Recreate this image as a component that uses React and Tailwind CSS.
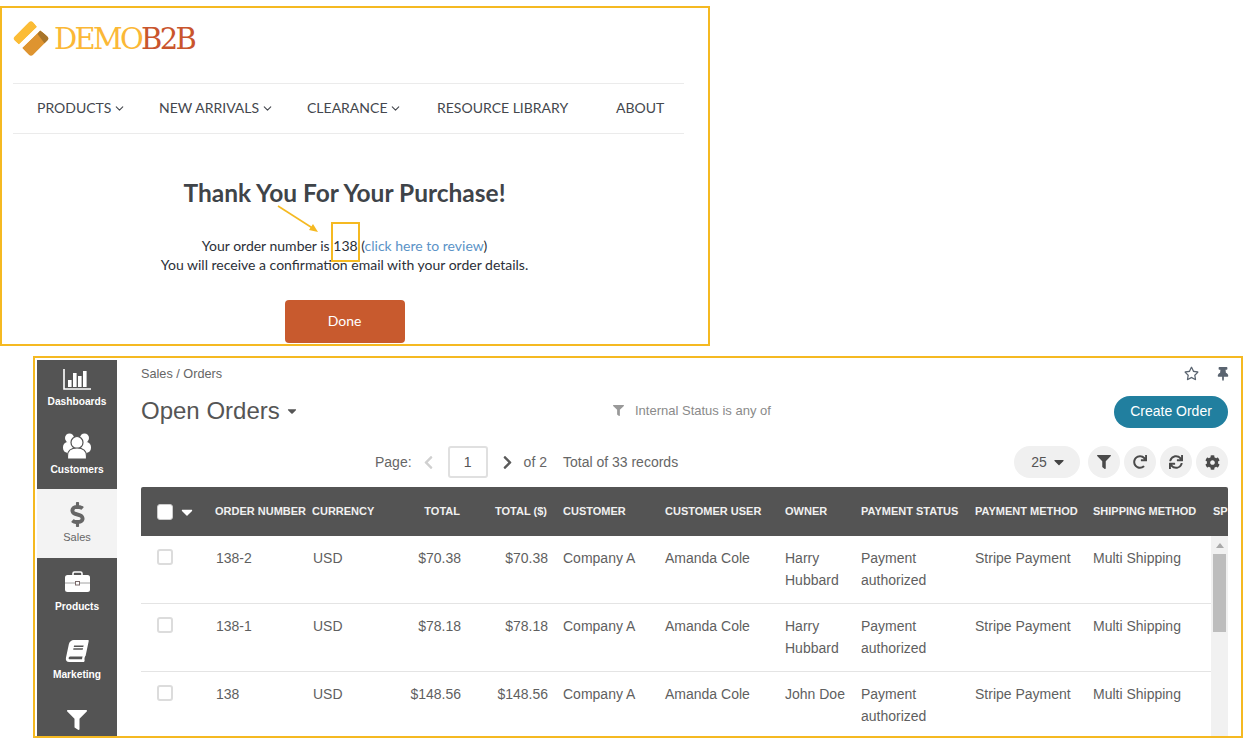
import React from 'react';
import {
  FaBook, FaCaretDown, FaChevronLeft, FaChevronRight, FaCog, FaDollarSign,
  FaFilter, FaRedo, FaRegStar, FaSync, FaThumbtack,
} from 'react-icons/fa';
import { LuChevronDown } from 'react-icons/lu';

const menu = [
  { label: 'PRODUCTS', caret: true, w: 'w-[122px]' },
  { label: 'NEW ARRIVALS', caret: true, w: 'w-[148px]' },
  { label: 'CLEARANCE', caret: true, w: 'w-[130px]' },
  { label: 'RESOURCE LIBRARY', w: 'w-[179px]' },
  { label: 'ABOUT', w: 'w-[48px]' },
];

const columns = [
  { label: 'ORDER NUMBER' },
  { label: 'CURRENCY' },
  { label: 'TOTAL', right: true },
  { label: 'TOTAL ($)', right: true },
  { label: 'CUSTOMER', pad: true },
  { label: 'CUSTOMER USER' },
  { label: 'OWNER' },
  { label: 'PAYMENT STATUS' },
  { label: 'PAYMENT METHOD' },
  { label: 'SHIPPING METHOD' },
  { label: 'SPECIAL' },
];

const orders = [
  { id: '138-2', total: '$70.38', owner: 'Harry Hubbard' },
  { id: '138-1', total: '$78.18', owner: 'Harry Hubbard' },
  { id: '138', total: '$148.56', owner: 'John Doe' },
];

const gridCols = 'grid grid-cols-[74px_97px_52px_97px_87px_117px_120px_76px_114px_118px_120px_60px]';

function ChartIcon() {
  return (
    <svg width="28" height="21" viewBox="0 0 28 21" fill="none">
      <path d="M1 0v20h27" stroke="white" strokeWidth="1.6" />
      <rect x="5" y="11" width="3.6" height="7" fill="white" />
      <rect x="10" y="4" width="3.6" height="14" fill="white" />
      <rect x="15" y="7" width="3.6" height="11" fill="white" />
      <rect x="20" y="2" width="3.6" height="16" fill="white" />
    </svg>
  );
}

function UsersIcon() {
  return (
    <svg width="28" height="26" viewBox="0 0 28 26">
      <circle cx="6.500" cy="5" r="4.500" fill="white" />
      <circle cx="21.500" cy="5" r="4.500" fill="white" />
      <rect x="0" y="9" width="28" height="11" rx="5" fill="white" />
      <circle cx="14" cy="9.500" r="6" fill="white" stroke="#545454" strokeWidth="1.2" />
      <path d="M4.500 26v-3q0-8 9.500-8t9.500 8v3z" fill="white" stroke="#545454" strokeWidth="1.2" />
    </svg>
  );
}

function CaseIcon() {
  return (
    <svg width="25" height="21" viewBox="0 0 25 21" fill="none">
      <path d="M8 5V2.500Q8 1 9.500 1h6Q17 1 17 2.500V5" stroke="white" strokeWidth="1.6" />
      <rect x="0" y="4" width="25" height="17" rx="2.500" fill="white" />
      <path d="M0 12h25" stroke="#8a8a8a" strokeWidth="0.8" />
      <rect x="10.500" y="10.500" width="4" height="3.500" fill="white" stroke="#7a6a6a" strokeWidth="1" />
    </svg>
  );
}

function Logo() {
  return (
    <svg width="36" height="36" viewBox="0 0 36 36">
      <defs>
        <clipPath id="logoClip">
          <rect x="5" y="4.500" width="26" height="26" rx="3" transform="rotate(45 18 17.500)" />
        </clipPath>
      </defs>
      <g clipPath="url(#logoClip)">
        <path d="M-2 17.500 L18 -2 L24 6 L6 23.500Z" fill="#fbbc36" />
        <path d="M9 27 L27 9.500 L38 17.500 L18 38Z" fill="#de9430" />
        <path d="M27 9.500 L38 17.500 L32 23 L24.500 13Z" fill="#a8752a" />
        <path d="M24 6 L6 23.500 L9 27 L27 9.500Z" fill="#fff" />
      </g>
    </svg>
  );
}

function SideItem({ icon, label, active, h = 'h-[68px]', box = 'h-[41px] pb-[3px]' }) {
  return (
    <div className={`${h} flex flex-col items-center shrink-0 ${active ? 'bg-[#f3f3f3] text-[#666] text-[11px]' : 'text-white font-bold text-[10.2px]'}`}>
      <div className={`${box} flex items-end justify-center`}>{icon}</div>
      <div className="leading-[14px] mt-[1px]">{label}</div>
    </div>
  );
}

function RoundBtn({ children }) {
  return (
    <button className="w-8 h-8 rounded-full bg-[#f0f0f0] flex items-center justify-center text-[#4a4a4a]">
      {children}
    </button>
  );
}

export default function App() {
  return (
    <div className="w-[1243px] h-[738px] overflow-hidden bg-white pt-[6px]">
      {/* Storefront confirmation */}
      <div className="relative w-[710px] h-[340px] border-2 border-[#f5b921] font-['Lato',sans-serif] text-[#3c3f44]">
        <div className="h-[75px] pl-[11px] pt-[13px] flex items-start">
          <Logo />
          <div className="ml-[5px] font-['DejaVu_Serif',serif] text-[29px] leading-[36px] tracking-[-2.7px]">
            <span className="text-[#fbb836]">DEMO</span>
            <span className="text-[#c9552d]">B2B</span>
          </div>
        </div>
        <div className="mx-[11px] w-[671px] h-[51px] pb-[2px] border-y border-[#ebebeb] flex items-center pl-[24px] text-[14px] text-[#44474d]">
          {menu.map((m) => (
            <div key={m.label} className={`${m.w} flex items-center shrink-0`}>
              {m.label}
              {m.caret && <LuChevronDown className="ml-[2px] mt-[2px]" size={13} />}
            </div>
          ))}
        </div>
        <h1 className="mt-[44px] text-center text-[24.5px] leading-[30px] font-bold text-[#3f4449] w-[685px]">
          Thank You For Your Purchase!
        </h1>
        <div className="mt-[28px] w-[685px] text-center text-[14px] leading-[19px] text-[#2c3038]">
          <div>
            Your order number is 138 (<span className="text-[#5b93c7]">click here to review</span>)
          </div>
          <div>You will receive a confirmation email with your order details.</div>
        </div>
        <div className="mt-[26px] w-[685px] flex justify-center">
          <button className="w-[120px] h-[43px] pb-[2px] rounded-[4px] bg-[#c85a2e] text-white text-[14px]">Done</button>
        </div>
        {/* annotation */}
        <div className="absolute left-[329px] top-[214px] w-[29px] h-[40px] border-2 border-[#f5b921]" />
        <svg className="absolute left-[270px] top-[194px]" width="50" height="36" viewBox="0 0 50 36" fill="none">
          <path d="M6 4 L42 27" stroke="#f5b921" strokeWidth="1.6" />
          <path d="M46 30 L37 28 L41 22Z" fill="#f5b921" />
        </svg>
      </div>

      {/* Admin orders grid */}
      <div className="mt-[10px] ml-[33px] w-[1210px] h-[382px] border-2 border-[#f5b921] pt-[2px] px-[2px] flex overflow-hidden font-['Liberation_Sans',sans-serif] text-[14px] text-[#5f5f5f]">
        <div className="w-[80px] h-full bg-[#545454] flex flex-col shrink-0 overflow-hidden">
          <SideItem icon={<ChartIcon />} label="Dashboards" h="h-[61px]" box="h-[34px] pb-[4px]" />
          <SideItem icon={<UsersIcon />} label="Customers" />
          <SideItem icon={<FaDollarSign size={25} />} label="Sales" active h="h-[69px]" box="h-[40px] pb-[2px]" />
          <SideItem icon={<CaseIcon />} label="Products" box="h-[41px] pb-[7px]" />
          <SideItem icon={<FaBook size={22} className="-skew-x-12" />} label="Marketing" box="h-[41px] pb-[5px]" />
          <SideItem icon={<FaFilter size={20} />} label="" box="h-[41px] pb-[5px]" />
        </div>

        <div className="flex-1 min-w-0 pl-[24px] pr-[11px] flex flex-col">
          <div className="h-[27px] flex items-center justify-between text-[12.7px] text-[#666]">
            <span className="pt-[2px]">Sales / Orders</span>
            <div className="flex items-center gap-[17px] -mr-[2px] text-[#5a6470]">
              <FaRegStar size={15} />
              <FaThumbtack size={14} />
            </div>
          </div>
          <div className="h-[47px] mt-[1px] flex items-center">
            <div className="w-[472px] pb-[2px] flex items-center text-[24px] text-[#555] shrink-0">
              Open Orders
              <FaCaretDown size={14} className="ml-[5px]" />
            </div>
            <div className="pb-[2px] flex items-center text-[13px] text-[#8a8a8a] flex-1">
              <FaFilter size={11} className="text-[#999] mr-[11px]" />
              Internal Status is any of
            </div>
            <button className="w-[114px] h-8 rounded-full bg-[#217f9f] text-white text-[14px]">Create Order</button>
          </div>
          <div className="h-[32px] mt-[11px] flex items-center justify-between">
            <div className="pl-[234px] flex items-center text-[14px] text-[#666]">
              <span>Page:</span>
              <FaChevronLeft size={15} className="ml-[9px] text-[#d0d0d0]" />
              <div className="w-[40px] h-8 ml-[12px] border-2 border-[#e0e0e0] rounded-[3px] flex items-center justify-center text-[#555]">1</div>
              <FaChevronRight size={15} className="ml-[12px] text-[#5a5a5a]" />
              <span className="ml-[9px]">of 2</span>
              <span className="ml-[16px]">Total of 33 records</span>
            </div>
            <div className="flex items-center gap-1">
              <div className="w-[66px] h-8 mr-[4px] pl-[4px] rounded-full bg-[#f0f0f0] flex items-center justify-center text-[#555]">
                25
                <FaCaretDown size={16} className="ml-[4px] text-[#444]" />
              </div>
              <RoundBtn><FaFilter size={14} /></RoundBtn>
              <RoundBtn><FaRedo size={14} /></RoundBtn>
              <RoundBtn><FaSync size={14} /></RoundBtn>
              <RoundBtn><FaCog size={15} /></RoundBtn>
            </div>
          </div>

          <div className="mt-[9px] flex-1 min-h-0 flex flex-col">
            <div className={`${gridCols} h-[49px] shrink-0 bg-[#545454] rounded-t-[2px] overflow-hidden items-center text-[11px] font-bold text-[#f0f0f0] whitespace-nowrap`}>
              <div className="pl-[16px] flex items-center">
                <span className="w-4 h-4 rounded-[3px] bg-white border border-[#ccc]" />
                <FaCaretDown size={18} className="ml-[5px] text-white" />
              </div>
              {columns.map((c) => (
                <div key={c.label} className={`${c.right ? 'text-right pr-[1px]' : ''} ${c.pad ? 'pl-[15px]' : ''}`}>{c.label}</div>
              ))}
            </div>
            <div className="flex-1 min-h-0 relative overflow-hidden">
              {orders.map((o) => (
                <div key={o.id} className={`${gridCols} h-[68px] border-b border-[#e4e4e4] mr-[17px] pt-[11px] leading-[22px]`}>
                  <div className="pl-[16px] pt-[2px]">
                    <span className="block w-4 h-4 rounded-[3px] border-2 border-[#dcdcdc]" />
                  </div>
                  <div className="pl-[1px]">{o.id}</div>
                  <div className="pl-[1px]">USD</div>
                  <div className="text-right">{o.total}</div>
                  <div className="text-right">{o.total}</div>
                  <div className="pl-[15px]">Company A</div>
                  <div>Amanda Cole</div>
                  <div>{o.owner}</div>
                  <div>Payment authorized</div>
                  <div>Stripe Payment</div>
                  <div>Multi Shipping</div>
                </div>
              ))}
              {/* scrollbar */}
              <div className="absolute right-0 top-0 bottom-0 w-[17px] bg-[#f1f1f1]">
                <div className="mx-auto mt-[7px] w-0 h-0 border-x-[4px] border-x-transparent border-b-[5px] border-b-[#a9a9a9]" />
                <div className="mx-auto mt-[6px] w-[13px] h-[78px] bg-[#bdbdbd]" />
              </div>
            </div>
          </div>
        </div>
      </div>
    </div>
  );
}
